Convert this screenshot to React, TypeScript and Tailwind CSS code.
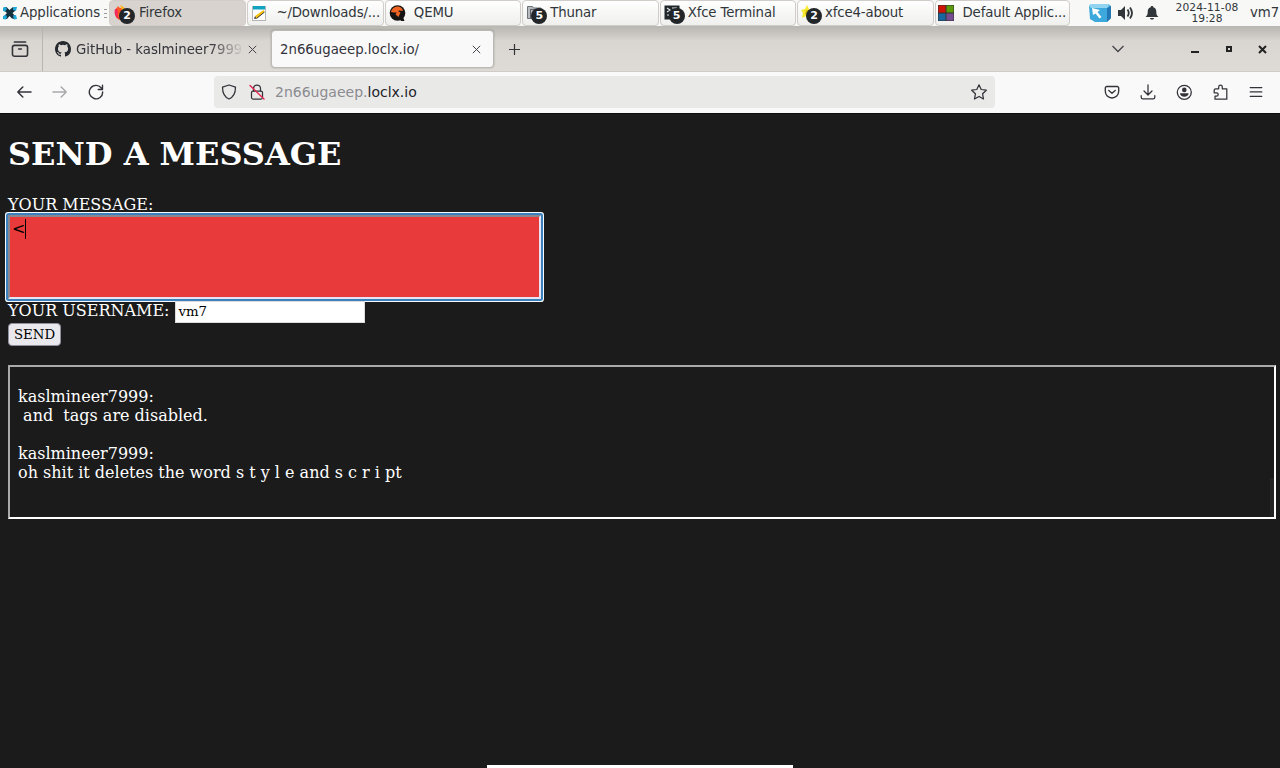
import type { ReactNode } from 'react';

const XfceMenuIcon = () => (
  <svg width="14" height="14" viewBox="0 0 14 14">
    <path d="M1 1.500 3.500 1 6.500 4 10 1l3 .5-1 3.500-2.500 2 2.500 3-.5 3L9 12.500 6.500 10 4 13l-3-.5.5-3L4 7 1.500 5z" fill="#14303c" />
    <path d="M0 1.500 3 1l1 2-2 2.500L0 5zM10 1h4l-1 4-3-1zM0 10l3-1 1 2-1 2.500-3-.5zM10 9.500l3-.5 1 4-3 .5z" fill="#20a8d8" />
  </svg>
);

const Count = ({ n }: { n: number }) => (
  <span className="absolute top-[3px] left-[5px] flex h-[16px] w-[16px] items-center justify-center rounded-full bg-[#222629] text-[11px] leading-none font-bold text-white">
    {n}
  </span>
);

const FirefoxIcon = () => (
  <svg width="16" height="16" viewBox="0 0 16 16">
    <path d="M1 5C2 3 3 3 4 1c1 1 1 2 3 2 3 0 6 2 6 6s-3 6-6 6-7-3-6-10z" fill="#ff5722" />
    <path d="M1 4c-1 4 0 8 4 10-1-2-2-4-1-7L3 4z" fill="#f5275c" />
    <path d="M6 0c3 1 6 3 7 7L8 5z" fill="#ffb928" />
  </svg>
);

const MousepadIcon = () => (
  <svg width="16" height="17" viewBox="0 0 16 17">
    <rect x="1.500" y="1.500" width="13" height="14" fill="#fff" stroke="#b5b5b5" />
    <rect x="2" y="1" width="12" height="3.500" fill="#13a3c2" />
    <path d="M4 11 12.500 5l1 2L5.500 13.500z" fill="#f5c211" />
    <path d="m5.500 13.500 8-6.500" stroke="#333" />
    <path d="m4 11-1 3 2.500-.5z" fill="#333" />
  </svg>
);

const QemuIcon = () => (
  <svg width="17" height="17" viewBox="0 0 17 17">
    <circle cx="8.500" cy="8" r="7.800" fill="#161412" />
    <path d="M9 10l5 2 1.500 4H12z" fill="#161412" />
    <path d="M2 7C3 3 6 1.500 9 1.500c3 .5 4.500 2 5 4.500l-4-.5-1.500 2L5 7.500z" fill="#f06423" />
    <path d="m8.500 6 3 1.500-2 4.500-3-2.500z" fill="#f06423" />
  </svg>
);

const ThunarIcon = () => (
  <svg width="16" height="16" viewBox="0 0 16 16">
    <path d="M1.500 1.500h5l1 1.500H15v10.500H1.500z" fill="#b7bcc0" stroke="#6b7176" />
    <path d="M4.500 4v9.500M4 4.500h6" stroke="#5b6166" />
  </svg>
);

const TerminalIcon = () => (
  <svg width="16" height="16" viewBox="0 0 16 16">
    <rect x=".5" y=".5" width="15" height="14" fill="#20272b" />
    <path d="m3 3 3 2-3 2M8 3h5M3 10h2" fill="none" stroke="#dfe3e5" strokeWidth="1.200" />
  </svg>
);

const AboutIcon = () => (
  <svg width="16" height="16" viewBox="0 0 16 16">
    <path d="m6 0 2 4 5 0-4 4 1 5-5-2-4 2 1-5-2-3 4-1z" fill="#f7e92e" />
    <path d="m5 5 3 1-1 4-3-1z" fill="#d7b70b" />
  </svg>
);

const DefaultAppsIcon = () => (
  <svg width="16" height="16" viewBox="0 0 16 16">
    <rect width="16" height="16" fill="#333" />
    <path d="M.5.500h7v7h-7z" fill="#cf1405" />
    <path d="M8.500.500h7v7h-7z" fill="#5b9a0a" />
    <path d="M.5 8.500h7v7h-7z" fill="#17679e" />
    <path d="M8.500 8.500h7v7h-7z" fill="#754b91" />
  </svg>
);

const tasks: { label: string; icon: ReactNode; count?: number; active?: boolean; gap: string; pad: string }[] = [
  { label: 'Firefox', icon: <FirefoxIcon />, count: 2, active: true, gap: 'gap-[8px]', pad: 'pl-[4px]' },
  { label: '~/Downloads/...', icon: <MousepadIcon />, gap: 'gap-[8px]', pad: 'pl-[3px]' },
  { label: 'QEMU', icon: <QemuIcon />, gap: 'gap-[8px]', pad: 'pl-[3px]' },
  { label: 'Thunar', icon: <ThunarIcon />, count: 5, gap: 'gap-[7px]', pad: 'pl-[3px]' },
  { label: 'Xfce Terminal', icon: <TerminalIcon />, count: 5, gap: 'gap-[7px]', pad: 'pl-[3px]' },
  { label: 'xfce4-about', icon: <AboutIcon />, count: 2, gap: 'gap-[7px]', pad: 'pl-[3px]' },
  { label: 'Default Applic...', icon: <DefaultAppsIcon />, gap: 'gap-[8px]', pad: 'pl-[2px]' },
];

const Panel = () => (
  <header className="flex h-[26px] shrink-0 items-center bg-[#f8f8f7] text-[13.3px] text-[#30363a]">
    <div className="flex w-[109px] items-center gap-[3px] pl-[3px]">
      <XfceMenuIcon />
      <span className="tracking-[-0.1px]">Applications</span>
      <span className="ml-px flex w-[3px] shrink-0 flex-col gap-[3px]">
        <i className="h-px bg-[#999]" />
        <i className="h-px bg-[#999]" />
        <i className="h-px bg-[#999]" />
      </span>
    </div>
    <div className="flex w-[962px]">
      {tasks.map((task) => (
        <div
          key={task.label}
          className={`mr-px flex h-[26px] min-w-0 flex-1 items-center overflow-hidden rounded-[4px] border whitespace-nowrap ${task.gap} ${task.pad} ${
            task.active ? 'border-[#d2cdc8] bg-[#d8d3cf]' : 'border-[#cfccc9] bg-linear-to-b from-white to-[#efefed]'
          }`}
        >
          <span className="relative flex h-[17px] w-[17px] shrink-0 items-center">
            {task.icon}
            {task.count && <Count n={task.count} />}
          </span>
          <span className="tracking-[-0.15px]">{task.label}</span>
        </div>
      ))}
    </div>
    <div className="flex flex-1 items-center">
      <svg className="ml-[18px]" width="22" height="20" viewBox="0 0 22 20">
        <path d="M0 3 2 1h17l3 2v12l-4 4H6l-5-3z" fill="#3da8dc" />
        <path d="m18 5 4-2v12l-4 4z" fill="#2377b5" />
        <path d="M0 3 2 1h17l1 2-2 2H2z" fill="#90d4ef" />
        <path d="m3 5 8 2-2.500 2 4 5-2 1.500-4-5L4 12z" fill="#fff" />
      </svg>
      <svg className="ml-[6px]" width="18" height="16" viewBox="0 0 18 16">
        <path d="M1 5h3l4-4v14l-4-4H1z" fill="#30363a" />
        <path d="M10.500 4.500q2.500 3.500 0 7M13 2.500q4 5.500 0 11" fill="none" stroke="#30363a" strokeWidth="1.800" />
      </svg>
      <svg className="ml-[10px]" width="14" height="16" viewBox="0 0 14 16">
        <path d="M7 1c.8 0 1.300.500 1.300 1.200C11 3 11.300 5 11.300 7c0 2.500.7 3.500 2.200 5H.5c1.500-1.500 2.200-2.500 2.200-5 0-2 .3-4 3-4.800C5.700 1.500 6.200 1 7 1zM5 13h4c0 2-4 2-4 0z" fill="#30363a" />
      </svg>
      <div className="ml-[13px] w-[70px] text-center text-[10.700px] leading-[11px] tracking-[0.08px] whitespace-nowrap">
        2024-11-08
        <br />
        19:28
      </div>
      <span className="ml-[8px] whitespace-nowrap">vm7</span>
    </div>
  </header>
);

const Icon = ({ children, size = 16, className = '' }: { children: ReactNode; size?: number; className?: string }) => (
  <svg
    className={`shrink-0 ${className}`}
    width={size}
    height={size}
    viewBox="0 0 16 16"
    fill="none"
    stroke="#33333a"
    strokeWidth="1.250"
    strokeLinecap="round"
    strokeLinejoin="round"
  >
    {children}
  </svg>
);

const TabBar = () => (
  <div className="flex h-[46px] shrink-0 border-b border-[#cfcbc6] bg-[linear-gradient(180deg,#b9b7b2_0px,#cbc7c2_9px,#d9d5d0_15px,#dedad5_45px)] text-[13.3px] text-[#33333a]">
    <div className="flex w-[43px] items-center border-r border-[#b8b4b0] pl-[11px]">
      <Icon size={18}>
        <rect x="1.300" y="4.800" width="13.400" height="9.700" rx="1.800" strokeWidth="1.400" />
        <path d="M3 1.800h10M6.800 8h2.400" strokeWidth="1.400" />
      </Icon>
    </div>
    <div className="flex w-[228px] items-center pt-px pl-[12px]">
      <svg width="16" height="16" viewBox="0 0 16 16" fill="#24292f">
        <path d="M8 0C3.580 0 0 3.580 0 8c0 3.540 2.290 6.530 5.470 7.590.4.070.55-.17.55-.38 0-.19-.01-.82-.01-1.490-2.010.37-2.530-.49-2.690-.94-.09-.23-.48-.94-.82-1.130-.28-.15-.68-.52-.01-.53.63-.01 1.080.58 1.230.82.72 1.210 1.870.87 2.330.66.070-.52.280-.87.510-1.070-1.780-.2-3.640-.89-3.640-3.950 0-.87.310-1.590.82-2.150-.08-.2-.36-1.020.08-2.120 0 0 .67-.21 2.200.82a7.700 7.700 0 0 1 4 0c1.530-1.040 2.200-.82 2.200-.82.44 1.100.16 1.920.08 2.120.51.56.82 1.270.82 2.150 0 3.070-1.870 3.750-3.650 3.950.29.25.54.73.54 1.480 0 1.070-.01 1.930-.01 2.200 0 .21.150.46.55.38A8 8 0 0 0 16 8c0-4.420-3.580-8-8-8z" />
      </svg>
      <span className="ml-[5px] w-[166px] overflow-hidden mask-[linear-gradient(90deg,#000_134px,transparent_168px)] pt-px whitespace-nowrap">
        GitHub - kaslmineer7999
      </span>
      <svg className="ml-[6px]" width="9" height="9" viewBox="0 0 9 9">
        <path d="m.8.800 7.400 7.400m0-7.400L.8 8.200" stroke="#44444a" />
      </svg>
    </div>
    <div className="mt-[4px] flex h-[38px] w-[223px] items-center justify-between rounded-[4px] border border-[#bcb8b4] bg-[#f9f9fa] pr-[12px] pl-[8px] shadow-[0_0_2px_rgba(0,0,0,0.25)]">
      <span className="pt-px">2n66ugaeep.loclx.io/</span>
      <svg width="9" height="9" viewBox="0 0 9 9">
        <path d="m.8.800 7.400 7.400m0-7.400L.8 8.200" stroke="#44444a" />
      </svg>
    </div>
    <div className="flex flex-1 items-center pt-px pl-[14px]">
      <svg width="13" height="13" viewBox="0 0 13 13">
        <path d="M6.500 1v11M1 6.500h11" stroke="#33333a" strokeWidth="1.200" />
      </svg>
      <svg className="ml-auto" width="14" height="8" viewBox="0 0 14 8">
        <path d="m1.500 1 5.500 5.500L12.500 1" fill="none" stroke="#44444a" strokeWidth="1.300" />
      </svg>
      <i className="mt-[5px] ml-[66px] h-[2px] w-[8px] bg-[#222]" />
      <i className="ml-[27px] h-[6px] w-[6px] border-2 border-[#222]" />
      <svg className="mr-[13px] ml-[26px]" width="9" height="9" viewBox="0 0 9 9">
        <path d="m1 1 7 7m0-7L1 8" stroke="#222" strokeWidth="2" />
      </svg>
    </div>
  </div>
);

const Toolbar = () => (
  <div className="flex h-[41px] shrink-0 items-center bg-[#f9f9fa] pb-px text-[14px]">
    <Icon className="ml-[16px]">
      <path d="M15 8H1.800M6.800 3 1.800 8l5 5" strokeWidth="1.500" />
    </Icon>
    <Icon className="ml-[20px] opacity-40">
      <path d="M1 8h13.200M9.200 3l5 5-5 5" strokeWidth="1.500" />
    </Icon>
    <Icon className="ml-[20px]">
      <path d="M13.300 4A6.700 6.700 0 1 0 14.700 8M14.500 1.200v4.300h-4.300" strokeWidth="1.400" />
    </Icon>
    <div className="ml-[110px] flex h-[32px] w-[781px] items-center rounded-[4px] bg-[#e9e9e8] pl-[7px]">
      <Icon>
        <path d="M8 1 14.500 3.200C14.500 9 12.500 13 8 15 3.500 13 1.500 9 1.500 3.200z" />
      </Icon>
      <Icon className="ml-[12px]">
        <rect x="2.500" y="7" width="11" height="8" rx="1.500" />
        <path d="M4.500 7V4.500a3.500 3.500 0 0 1 7 0V7" />
        <path d="m1 1.500 14 13.500" stroke="#e22850" strokeWidth="1.400" />
      </Icon>
      <span className="ml-[10px] pt-px text-[#8b8b90]">
        2n66ugaeep.<span className="text-[#222228]">loclx.io</span>
      </span>
      <Icon className="mr-[8px] ml-auto">
        <path d="m8 .8 2.200 4.700 5.100.7-3.700 3.600.9 5.200L8 12.500 3.500 15l.9-5.200L.7 6.200l5.100-.7z" />
      </Icon>
    </div>
    <Icon className="ml-[109px]">
      <path d="M2.800 2.500h10.400a1.500 1.500 0 0 1 1.500 1.500v3.300a6.700 6.700 0 0 1-13.400 0V4a1.500 1.500 0 0 1 1.500-1.500zM4.800 6.500 8 9.300l3.200-2.800" strokeWidth="1.350" />
    </Icon>
    <Icon className="ml-[20px]">
      <path d="M8 .8v10M4 7l4 4 4-4M1.200 11.500v1.700a1.700 1.700 0 0 0 1.700 1.700h10.200a1.700 1.700 0 0 0 1.700-1.700v-1.700" />
    </Icon>
    <Icon className="ml-[20px]">
      <circle cx="8.300" cy="8.300" r="7" strokeWidth="1.300" />
      <circle cx="8.300" cy="5.900" r="2.300" fill="#33333a" stroke="none" />
      <path d="M4 9.300h8.600c0 2-1.900 3.500-4.300 3.500S4 11.300 4 9.300z" fill="#33333a" stroke="none" />
    </Icon>
    <Icon className="ml-[20px]">
      <path d="M6.700 4.800V2.900a1.800 1.800 0 0 1 3.600 0v1.900h4.500v10.400H3v-3h1.500a1.600 1.600 0 0 0 0-3.400H2.200V6.300a1.500 1.500 0 0 1 1.500-1.500z" />
    </Icon>
    <Icon className="ml-[20px]">
      <path d="M2.200 3.500h11.600M2.200 7.900h11.600M2.200 12.300h11.600" />
    </Icon>
  </div>
);

const messages = [
  { user: 'kaslmineer7999', text: '\u00a0and\u00a0 tags are disabled.' },
  { user: 'kaslmineer7999', text: 'oh shit it deletes the word s t y l e and s c r i pt' },
];

const ChatPage = () => (
  <main className="flex min-h-0 flex-1 flex-col border-t border-[#0c0c0c] bg-[#1b1b1b] pr-[4px] pl-[8px] font-['DejaVu_Serif',serif] text-[16px] leading-[19px] text-white">
    <h1 className="mt-[21px] text-[32px] leading-[38px] font-bold">SEND A MESSAGE</h1>
    <div className="mt-[22px]">YOUR MESSAGE:</div>
    <div className="mt-px flex h-[84px] w-[533px] rounded-[1px] border-2 border-t-[#8b8790] border-r-[#e6e3f2] border-b-[#e6e3f2] border-l-[#8b8790] bg-[#e83a3a] pt-[2px] pl-[2px] text-black shadow-[0_0_0_2px_#3c7fbd,0_0_0_3px_#f4fbff]">
      <span className="font-['DejaVu_Sans',sans-serif]">&lt;</span>
      <i className="h-[20px] w-px bg-black" />
    </div>
    <div className="mt-[2px] flex h-[22px]">
      <span>YOUR USERNAME:</span>
      <span className="ml-[6px] h-[22px] w-[190px] border border-[#dcdcdc] bg-white pl-[2px] text-[13.3px] leading-[20px] text-black">
        vm7
      </span>
    </div>
    <span className="flex h-[23px] w-[53px] items-center justify-center rounded-[4px] border border-[#8f8f9d] bg-[#e9e9ed] text-[13.3px] text-black">
      SEND
    </span>
    <section className="relative mt-[19px] h-[154px] border-2 border-t-[#a9a9a9] border-r-white border-b-white border-l-[#a9a9a9] px-[8px] pt-[20px]">
      {messages.map((message) => (
        <p key={message.text} className="mb-[19px]">
          {message.user}:
          <br />
          {message.text}
        </p>
      ))}
      <i className="absolute right-0 bottom-0 h-[39px] w-[4px] bg-[#252525]" />
    </section>
    <div className="mt-auto mr-[4px] h-[3px] w-[306px] self-center bg-white" />
  </main>
);

export default function App() {
  return (
    <div className="flex h-screen flex-col overflow-hidden bg-[#1b1b1b] font-['DejaVu_Sans',sans-serif]">
      <Panel />
      <TabBar />
      <Toolbar />
      <ChatPage />
    </div>
  );
}
